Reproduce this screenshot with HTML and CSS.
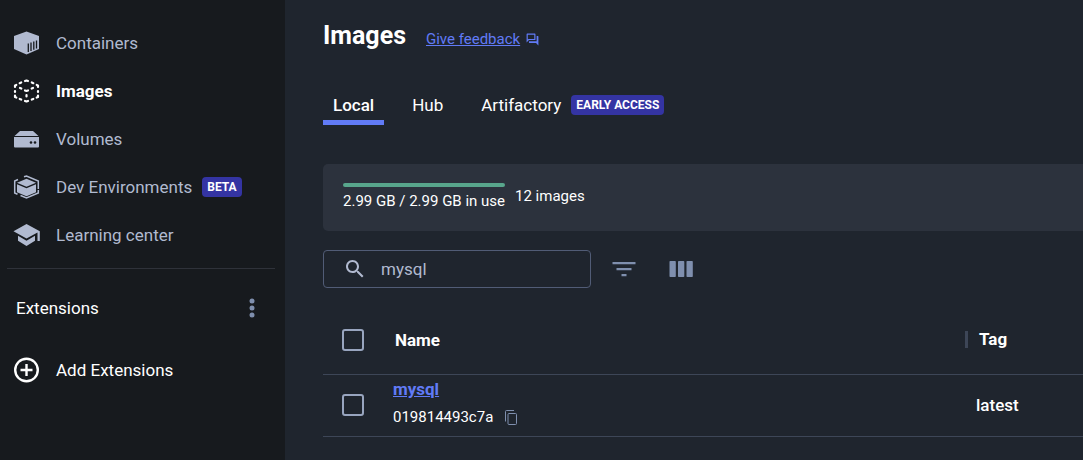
FILE: index.html
```html
<!DOCTYPE html>
<html lang="en">
<head>
<meta charset="utf-8">
<title>Images</title>
<link rel="stylesheet" href="styles.css">
</head>
<body>
<div class="app">
  <aside class="sidebar">
    <nav class="nav">
      <a class="nav-item" href="#containers">
        <svg class="nav-icon" viewBox="0 0 26 24"><path fill="currentColor" d="M13 .5 25.500 5v13L13 23.500.5 18V5z"/><path stroke="#171a1e" stroke-width="1.300" d="M14.800 12.500v8.500M17.500 11.500v8.500M20.300 10.500v8.300M23 9.500v8"/></svg>
        <span>Containers</span>
      </a>
      <a class="nav-item active" href="#images" aria-current="page">
        <svg class="nav-icon" viewBox="0 0 26 24" fill="none" stroke="currentColor" stroke-width="2.200" stroke-linecap="round" stroke-linejoin="round"><path d="M11.500 2 13 1.500l1.500.5M6.200 4.200l1.500-.7M19.800 4.200l-1.500-.7M1.500 8V6.500L2.800 6M24.500 8V6.500L23.200 6M1.500 12v1M24.500 12v1M1.500 16.500V18l1.300.5M24.500 16.500V18l-1.300.5M6.200 20l1.500.6M19.800 20l-1.500.6M11.500 22l1.500.5 1.500-.5M6.500 9l1.300.6M19.500 9l-1.300.6M11.500 11.500l1.500.5 1.500-.5M13 16v1.500"/></svg>
        <span>Images</span>
      </a>
      <a class="nav-item" href="#volumes">
        <svg class="nav-icon" viewBox="0 0 26 24"><path fill="currentColor" d="M6.500 4h13L25 9H1zM.5 10h25v9.500a1 1 0 0 1-1 1h-23a1 1 0 0 1-1-1z"/><circle cx="17.500" cy="15.500" r="1.300" fill="#171a1e"/><circle cx="21.500" cy="15.500" r="1.300" fill="#171a1e"/></svg>
        <span>Volumes</span>
      </a>
      <a class="nav-item" href="#dev-environments">
        <svg class="nav-icon" viewBox="0 0 26 24"><path fill="currentColor" d="m13 3.800 9.500 4L13 11.700 3.500 7.800zM3.500 9.300 13 13.200l9.500-3.900v7.900L13 21.200l-9.500-4z"/><path fill="none" stroke="currentColor" stroke-width="1.500" d="M10.500 1.800 13 1l11.800 5v8M4.500 4.500 1.200 6v12L4 19.200M24.800 15v3L13 23l-6-2.500"/></svg>
        <span>Dev Environments</span>
        <span class="badge">BETA</span>
      </a>
      <a class="nav-item" href="#learning-center">
        <svg class="nav-icon" viewBox="0 0 26 24"><path fill="currentColor" d="M13 1 0 8.300l13 7.200 11-6V18h2.300V8.300zM4.500 12.800v5L13 23l8.500-5.200v-5L13 17.800z"/></svg>
        <span>Learning center</span>
      </a>
    </nav>
    <div class="extensions">
      <span>Extensions</span>
      <button class="icon-button" type="button" aria-label="Extension options">
        <svg class="dots" viewBox="0 0 6 20" fill="currentColor"><circle cx="3" cy="3" r="2.500"/><circle cx="3" cy="10" r="2.500"/><circle cx="3" cy="17" r="2.500"/></svg>
      </button>
    </div>
    <a class="nav-item add" href="#add-extensions">
      <svg class="nav-icon add-icon" viewBox="0 0 26 26" fill="none" stroke="currentColor" stroke-width="2.400"><circle cx="13" cy="13" r="11.300"/><path d="M13 7v12M7 13h12"/></svg>
      <span>Add Extensions</span>
    </a>
  </aside>
  <main class="main">
    <header class="heading">
      <h1>Images</h1>
      <a class="feedback" href="#feedback">Give feedback</a>
      <svg class="feedback-icon" viewBox="1 1 22 22" fill="currentColor"><path d="M15 4v7H5.170L4 12.170V4h11m1-2H3c-.55 0-1 .45-1 1v14l4-4h10c.55 0 1-.45 1-1V3c0-.55-.45-1-1-1m5 4h-2v9H6v2c0 .55.45 1 1 1h11l4 4V7c0-.55-.45-1-1-1"/></svg>
    </header>
    <div class="tabs" role="tablist">
      <button class="tab selected" type="button" role="tab" aria-selected="true">Local</button>
      <button class="tab" type="button" role="tab" aria-selected="false">Hub</button>
      <button class="tab" type="button" role="tab" aria-selected="false">Artifactory <span class="badge">EARLY ACCESS</span></button>
    </div>
    <section class="usage">
      <div class="disk">
        <div class="bar"></div>
        <span>2.99 GB / 2.99 GB in use</span>
      </div>
      <span class="count">12 images</span>
    </section>
    <div class="toolbar">
      <label class="search">
        <svg class="search-icon" viewBox="3 3 18 18" fill="currentColor"><path d="M15.500 14h-.79l-.28-.27C15.410 12.590 16 11.110 16 9.500 16 5.910 13.090 3 9.500 3S3 5.910 3 9.500 5.910 16 9.500 16c1.610 0 3.090-.59 4.230-1.570l.27.28v.79l5 4.990L20.490 19zm-6 0C7.010 14 5 11.990 5 9.500S7.010 5 9.500 5 14 7.010 14 9.500 11.990 14 9.500 14"/></svg>
        <input type="text" value="mysql" aria-label="Search images">
      </label>
      <button class="icon-button" type="button" aria-label="Filter">
        <svg class="tool-icon" viewBox="0 0 24 16" fill="currentColor"><path d="M.5 1h23v2.300H.5zM4.500 7h15v2.300h-15zM9.500 13h5v2.300h-5z"/></svg>
      </button>
      <button class="icon-button" type="button" aria-label="Columns">
        <svg class="tool-icon" viewBox="0 0 24 16" fill="currentColor"><rect x=".5" width="6.300" height="16" rx=".8"/><rect x="9" width="6.300" height="16" rx=".8"/><rect x="17.500" width="6.300" height="16" rx=".8"/></svg>
      </button>
    </div>
    <table class="images">
      <thead>
        <tr>
          <th class="pick"><input type="checkbox" aria-label="Select all images"></th>
          <th class="name">Name</th>
          <th class="tag"><span class="divided">Tag</span></th>
        </tr>
      </thead>
      <tbody>
        <tr>
          <td class="pick"><input type="checkbox" aria-label="Select mysql"></td>
          <td class="name">
            <a class="image-link" href="#mysql">mysql</a>
            <div class="digest">
              <span>019814493c7a</span>
              <button class="icon-button" type="button" aria-label="Copy image ID">
                <svg class="copy-icon" viewBox="0 0 12 15" fill="none" stroke="currentColor"><path d="M.5 11.500v-10a1 1 0 0 1 1-1H9"/><rect x="3" y="3.500" width="8.500" height="11" rx="1"/></svg>
              </button>
            </div>
          </td>
          <td class="tag">latest</td>
        </tr>
      </tbody>
    </table>
  </main>
</div>
</body>
</html>
```
FILE: styles.css
```css
* {
  box-sizing: border-box;
}

body {
  margin: 0;
  background: #1f252e;
  color: #fff;
  font-family: Roboto, "Liberation Sans", sans-serif;
  font-size: 17px;
  line-height: 24px;
}

button,
input {
  margin: 0;
  padding: 0;
  border: 0;
  background: none;
  color: inherit;
  font: inherit;
}

svg {
  display: block;
  flex: none;
}

.app {
  display: flex;
  min-height: 100vh;
}

.sidebar {
  flex: 0 0 285px;
  padding: 19px 10px 0 7px;
  background: #171a1e;
}

.nav {
  padding-bottom: 9px;
  border-bottom: 1px solid #2f323a;
}

.nav-item {
  display: flex;
  align-items: center;
  height: 48px;
  padding-left: 6px;
  color: #b1bad0;
  text-decoration: none;
}

.nav-item.active {
  color: #fff;
  font-weight: 700;
}

.nav-icon {
  width: 27px;
  height: 24px;
  margin-right: 16px;
}

.badge {
  margin-left: 10px;
  padding: 0 5px;
  border-radius: 4px;
  background: #3434a3;
  color: #fff;
  font-size: 12px;
  font-weight: 700;
  line-height: 20px;
}

.extensions {
  display: flex;
  align-items: center;
  justify-content: space-between;
  height: 77px;
  padding: 0 20px 0 9px;
}

.icon-button {
  display: block;
  color: #7f8fae;
}

.dots {
  width: 6px;
  height: 20px;
}

.add {
  color: #fff;
}

.add-icon {
  height: 26px;
}

.main {
  flex: 1;
  min-width: 0;
  padding: 20px 0 0 38px;
}

.heading {
  display: flex;
  align-items: center;
  height: 32px;
}

h1 {
  margin: 0 20px 0 0;
  font-size: 25px;
  font-weight: 700;
}

.feedback {
  margin-top: 6px;
  color: #617bf6;
  font-size: 15px;
}

.feedback-icon {
  width: 13px;
  height: 13px;
  margin: 7px 0 0 6px;
  color: #617bf6;
}

.tabs {
  display: flex;
  gap: 18px;
  margin-top: 34px;
}

.tab {
  display: flex;
  align-items: center;
  height: 39px;
  padding: 0 10px 2px;
  border-bottom: 5px solid transparent;
  border-top: 5px solid transparent;
}

.selected {
  border-bottom-color: #617bf6;
  font-weight: 500;
}

.usage {
  display: flex;
  align-items: center;
  gap: 10px;
  height: 67px;
  margin-top: 39px;
  padding: 0 20px;
  border-radius: 5px 0 0 5px;
  background: #2c323d;
  font-size: 15px;
}

.bar {
  height: 4px;
  margin-bottom: 2px;
  border-radius: 2px;
  background: #58a68c;
}

.count {
  padding-bottom: 3px;
}

.toolbar {
  display: flex;
  align-items: center;
  gap: 33px;
  margin-top: 19px;
}

.search {
  display: flex;
  align-items: center;
  width: 268px;
  height: 38px;
  margin-right: -12px;
  padding: 0 22px;
  border: 1px solid #515c76;
  border-radius: 4px;
  color: #b1bad0;
}

.search-icon {
  width: 18px;
  height: 18px;
  margin-right: 17px;
}

.search input {
  min-width: 0;
  flex: 1;
}

.tool-icon {
  width: 24px;
  height: 16px;
}

.images {
  width: 100%;
  margin-top: 18px;
  border-collapse: collapse;
  table-layout: fixed;
  text-align: left;
}

.images th,
.images td {
  padding: 0;
  border-bottom: 1px solid #3d4657;
}

.images th {
  height: 68px;
  font-weight: 700;
}

.images td {
  height: 62px;
}

.pick {
  width: 70px;
}

.pick input {
  display: block;
  width: 22px;
  height: 22px;
  margin-left: 19px;
  border: 2px solid #98a5bf;
  border-radius: 3px;
  appearance: none;
}

.images th.name {
  padding-left: 2px;
}

.images td.name {
  padding-bottom: 4px;
}

.images .tag {
  width: 107px;
}

.images td.tag {
  font-weight: 500;
}

.divided {
  display: block;
  height: 17px;
  margin-left: -11px;
  padding-left: 11px;
  border-left: 3px solid #3d4657;
  line-height: 17px;
}

.image-link {
  color: #617bf6;
  font-weight: 700;
}

.digest {
  display: flex;
  align-items: center;
  gap: 12px;
  margin-top: 4px;
  font-size: 15px;
}

.copy-icon {
  width: 12px;
  height: 15px;
}
```
